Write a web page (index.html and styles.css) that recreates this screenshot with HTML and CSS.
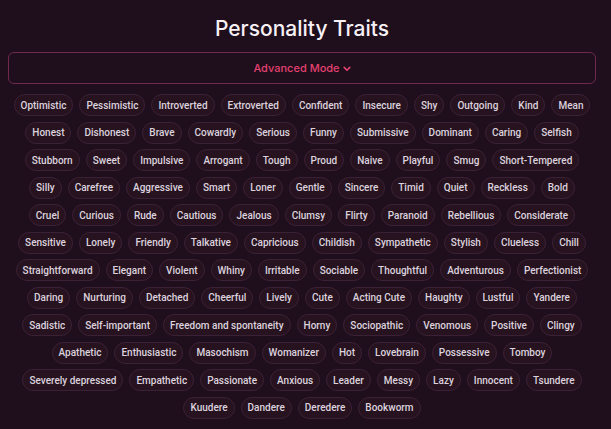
FILE: index.html
```html
<!DOCTYPE html>
<html lang="en">
<head>
    <meta charset="UTF-8">
    <meta name="viewport" content="width=device-width, initial-scale=1.0">
    <title>Personality Traits</title>
    <link rel="stylesheet" href="styles.css">
</head>
<body>
    <div class="traits-panel">
        <h1 class="title">Personality Traits</h1>

        <button class="advanced-toggle">
            Advanced Mode
            <svg class="chevron" viewBox="0 0 10 10" width="8" height="8">
                <path d="M1.5 3 L5 6.5 L8.5 3" fill="none" stroke="currentColor" stroke-width="2" stroke-linecap="round" stroke-linejoin="round"/>
            </svg>
        </button>

        <div class="trait-list" id="traits"></div>
    </div>

    <script>
        const traits = [
            'Optimistic', 'Pessimistic', 'Introverted', 'Extroverted', 'Confident', 'Insecure', 'Shy', 'Outgoing', 'Kind', 'Mean',
            'Honest', 'Dishonest', 'Brave', 'Cowardly', 'Serious', 'Funny', 'Submissive', 'Dominant', 'Caring', 'Selfish',
            'Stubborn', 'Sweet', 'Impulsive', 'Arrogant', 'Tough', 'Proud', 'Naive', 'Playful', 'Smug', 'Short-Tempered',
            'Silly', 'Carefree', 'Aggressive', 'Smart', 'Loner', 'Gentle', 'Sincere', 'Timid', 'Quiet', 'Reckless', 'Bold',
            'Cruel', 'Curious', 'Rude', 'Cautious', 'Jealous', 'Clumsy', 'Flirty', 'Paranoid', 'Rebellious', 'Considerate',
            'Sensitive', 'Lonely', 'Friendly', 'Talkative', 'Capricious', 'Childish', 'Sympathetic', 'Stylish', 'Clueless', 'Chill',
            'Straightforward', 'Elegant', 'Violent', 'Whiny', 'Irritable', 'Sociable', 'Thoughtful', 'Adventurous', 'Perfectionist',
            'Daring', 'Nurturing', 'Detached', 'Cheerful', 'Lively', 'Cute', 'Acting Cute', 'Haughty', 'Lustful', 'Yandere',
            'Sadistic', 'Self-important', 'Freedom and spontaneity', 'Horny', 'Sociopathic', 'Venomous', 'Positive', 'Clingy',
            'Apathetic', 'Enthusiastic', 'Masochism', 'Womanizer', 'Hot', 'Lovebrain', 'Possessive', 'Tomboy',
            'Severely depressed', 'Empathetic', 'Passionate', 'Anxious', 'Leader', 'Messy', 'Lazy', 'Innocent', 'Tsundere',
            'Kuudere', 'Dandere', 'Deredere', 'Bookworm'
        ];

        const list = document.getElementById('traits');

        traits.forEach((name) => {
            const chip = document.createElement('button');
            chip.className = 'trait';
            chip.textContent = name;
            chip.addEventListener('click', () => chip.classList.toggle('selected'));
            list.appendChild(chip);
        });
    </script>
</body>
</html>
```

FILE: styles.css
```css
body {
    margin: 0;
    background-color: #1f0e1c;
    font-family: Roboto, "Noto Sans", sans-serif;
    color: #ddd3df;
}

.traits-panel {
    padding: 14px 15px 0 8px;
}

.title {
    margin: 0 0 8px;
    text-align: center;
    font-family: Inter, "Open Sans", sans-serif;
    font-size: 21px;
    font-weight: 500;
    color: #f7f1f6;
    line-height: 30px;
}

.advanced-toggle {
    display: flex;
    justify-content: center;
    align-items: center;
    gap: 3px;
    width: 100%;
    height: 32px;
    background: none;
    border: 1px solid #70294d;
    border-radius: 6px;
    color: #e3416f;
    font-family: Inter, sans-serif;
    font-size: 11px;
    font-weight: 500;
    cursor: pointer;
}

.chevron {
    margin-top: 1px;
}

.trait-list {
    display: flex;
    flex-wrap: wrap;
    justify-content: center;
    column-gap: 6px;
    row-gap: 5.5px;
    margin-top: 10px;
}

.trait {
    height: 22px;
    padding: 0 6px;
    background-color: #27121f;
    border: 1px solid #3b2136;
    border-radius: 11px;
    color: #dcd2de;
    font-family: Roboto, sans-serif;
    font-size: 10px;
    font-weight: 500;
    cursor: pointer;
    transition: background-color 0.2s;
}

.trait:hover {
    background-color: #34192f;
}

.trait.selected {
    border-color: #dc3b6b;
    color: #fff;
}
```
